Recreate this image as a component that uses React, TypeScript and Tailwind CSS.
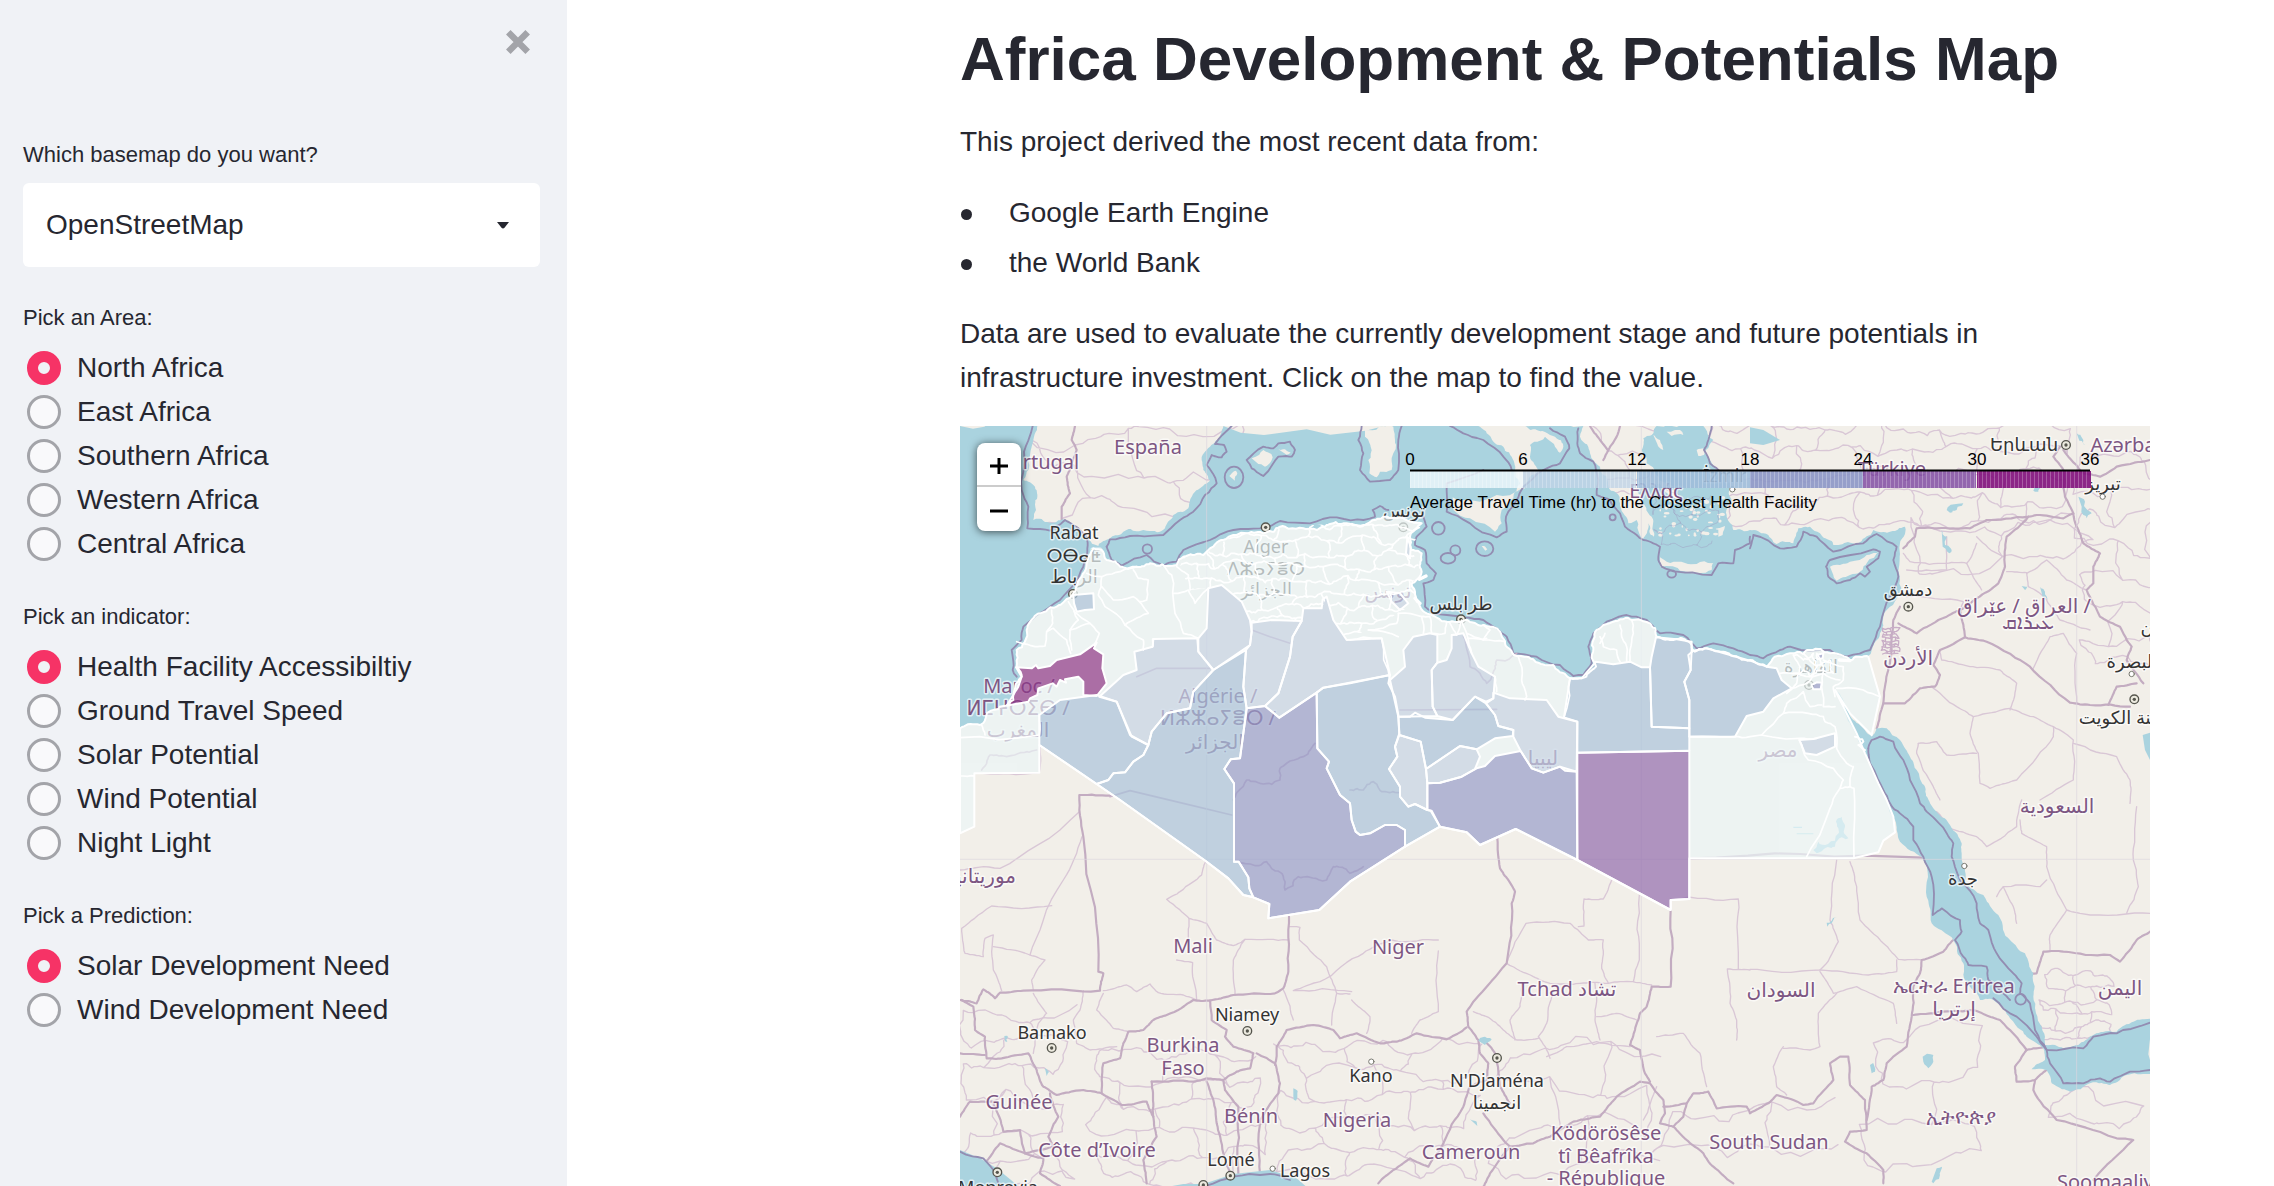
import { useState } from "react";

/* ---------- geometry helpers for the map drawing ---------- */

type Pt = [number, number];

const parse = (s: string): Pt[] =>
  s.trim().split(/\s+/).map((p) => p.split(",").map(Number) as Pt);

const hash = (x: number, y: number) => {
  const v = Math.sin(x * 12.9898 + y * 78.233) * 43758.5453;
  return v - Math.floor(v);
};

const split = (a: Pt, b: Pt, amp: number, depth: number): Pt[] => {
  const len = Math.hypot(b[0] - a[0], b[1] - a[1]);
  if (depth === 0 || len < 10) return [b];
  const mx = (a[0] + b[0]) / 2;
  const my = (a[1] + b[1]) / 2;
  const m: Pt = [
    mx + (hash(mx, my) - 0.5) * len * amp,
    my + (hash(my, mx) - 0.5) * len * amp,
  ];
  return [...split(a, m, amp, depth - 1), ...split(m, b, amp, depth - 1)];
};

const draw = (pts: Pt[], close = false) =>
  "M" + pts.map((p) => `${Math.round(p[0])},${Math.round(p[1])}`).join("L") + (close ? "Z" : "");

const line = (s: string) => draw(parse(s));
const shape = (s: string) => draw(parse(s), true);

const rough = (s: string, close = false, amp = 0.3, depth = 3) => {
  const p = parse(s);
  const out: Pt[] = [p[0]];
  for (let i = 1; i < p.length; i++) out.push(...split(p[i - 1], p[i], amp, depth));
  return draw(out, close);
};

const mesh = (x0: number, y0: number, x1: number, y1: number, cell: number, amp = 0.35) => {
  const at = (i: number, j: number): Pt => [
    x0 + i * cell + (hash(i + x0, j + y0) - 0.5) * cell * 0.7,
    y0 + j * cell * 0.8 + (hash(j + y0 + 7, i + x0) - 0.5) * cell * 0.6,
  ];
  const nx = Math.floor((x1 - x0) / cell);
  const ny = Math.floor((y1 - y0) / (cell * 0.8));
  const out: string[] = [];
  for (let i = 0; i <= nx; i++)
    for (let j = 0; j <= ny; j++) {
      const a = at(i, j);
      if (i < nx) out.push(draw([a, ...split(a, at(i + 1, j), amp, 3)]));
      if (j < ny && (i + j) % 2 === 0) out.push(draw([a, ...split(a, at(i, j + 1), amp, 3)]));
    }
  return out.join("");
};

/* ---------- map data ---------- */

const mediterranean =
  "30,18 262,18 250,60 240,110 235,150 220,180 255,200 262,230 258,270 250,300 300,308 350,300 375,315 400,345 445,378 480,355 520,335 580,330 645,325 670,285 715,265 735,215 780,182 760,150 755,120 780,80 815,35 820,18 1585,18 1610,40 1635,70 1660,80 1685,110 1695,150 1710,190 1700,215 1725,205 1765,150 1740,110 1740,75 1785,50 1815,80 1830,98 1840,80 1815,50 1760,30 1720,18 1900,18 1890,50 1920,100 1950,140 1975,200 2000,220 2020,280 2035,310 2060,300 2075,360 2095,310 2112,350 2105,290 2080,250 2060,210 2100,200 2130,190 2090,130 2075,90 2080,55 2110,40 2120,18 2260,18 2290,60 2265,100 2300,150 2340,190 2345,240 2330,290 2350,330 2400,330 2440,340 2480,372 2530,370 2545,325 2580,320 2610,340 2650,375 2720,372 2770,330 2820,335 2865,320 2850,370 2850,480 2820,560 2790,640 2765,690 2755,710 2700,720 2640,700 2580,690 2520,700 2450,740 2400,720 2370,715 2320,695 2270,685 2235,695 2215,665 2160,660 2120,650 2100,610 2040,598 1990,605 1940,630 1930,690 1938,740 1895,775 1860,775 1810,735 1750,718 1700,708 1665,670 1650,635 1600,615 1545,600 1490,605 1430,580 1400,545 1395,515 1385,490 1415,455 1415,400 1385,390 1380,350 1415,310 1370,300 1300,290 1240,315 1190,310 1130,315 1060,325 990,320 940,340 850,345 790,380 760,405 700,410 680,435 600,430 560,440 510,440 470,420 455,390 430,385 410,430 395,470 370,520 320,560 270,580 230,630 200,690 200,740 215,770 190,840 150,860 90,915 30,925";

const redSea =
  "2655,810 2680,840 2695,875 2730,915 2765,950 2780,925 2810,925 2850,960 2880,1010 2900,1050 2925,1100 2940,1150 2960,1175 3000,1215 3035,1270 3035,1315 3045,1390 3100,1425 3145,1485 3180,1560 3225,1600 3250,1660 3250,1730 3275,1820 3285,1875 3340,1885 3385,1875 3430,1845 3500,1835 3550,1805 3610,1798 3610,1960 3530,1965 3480,1995 3420,1990 3360,2015 3305,1990 3290,1950 3245,1948 3285,1920 3280,1885 3230,1850 3180,1795 3130,1740 3090,1740 3045,1680 3040,1630 3010,1560 2945,1510 2930,1430 2915,1310 2850,1265 2835,1200 2810,1140 2785,1090 2745,1000 2720,950 2690,890";

const otherWater = [
  "600,2310 700,2292 760,2292 850,2262 960,2250 1040,2275 1080,2310",
  "30,2190 90,2215 140,2245 220,2310 30,2310",
  "3578,945 3610,935 3610,1040 3585,990",
  "2400,22 2440,30 2490,60 2440,75 2400,70",
];

const lakes = [
  "2918,1910 2950,1905 2950,1925 2935,1945 2920,1925",
  "3385,230 3405,245 3425,280 3410,295 3395,260",
  "3270,500 3285,515 3293,540 3278,530",
  "2975,330 2990,350 2985,375 3005,390 2998,400 2978,380",
  "2990,270 3040,250 3020,270 3000,278",
  "3215,498 3232,500 3225,510",
  "1585,1862 1605,1850 1625,1858 1605,1875",
  "1560,2098 1580,2105 1582,2118",
  "2630,1508 2660,1492 2645,1510 2632,1520",
  "2760,1935 2770,1930 2775,1955 2765,1960",
  "2960,2245 2975,2240 2970,2265 2950,2290 2945,2285",
  "1030,2005 1040,2010 1038,2042 1030,2030",
  "163,1848 173,1848 172,1866 165,1864",
  "285,1945 298,1955 290,1968",
  "3380,40 3400,60 3405,75 3388,62",
  "3255,200 3270,205 3265,215 3250,212",
];

const islands = [
  "1245,30 1300,18 1330,20 1335,60 1330,100 1325,150 1290,155 1280,172 1258,160 1255,120 1262,80 1245,50",
  "1508,232 1560,240 1640,225 1705,208 1690,235 1655,270 1655,310 1635,335 1560,295 1510,270",
  "905,115 940,90 968,112 945,140 925,132",
  "985,88 1005,88 1022,97 1010,104",
  "838,168 858,152 862,160 855,182",
  "2130,412 2150,425 2180,425 2240,432 2290,430 2285,450 2240,458 2190,452 2130,440",
  "2640,440 2670,435 2700,425 2750,405 2785,395 2750,430 2730,455 2700,465 2660,482 2650,465",
  "2305,325 2325,318 2318,345 2305,350",
  "2120,175 2160,205 2190,235 2175,235 2140,210",
  "2240,90 2260,85 2262,105 2245,108",
  "2110,45 2130,60 2140,90 2122,72",
  "2150,35 2190,30 2200,45 2165,48",
  "1595,378 1612,388 1606,392",
];

const aegean: Pt[] = Array.from({ length: 54 }, (_, i) => [
  2130 + hash(i + 2, 3.7) * 190,
  232 + hash(5.3, i * 1.7) * 115,
]);

const maritime = [
  "248,18 222,95 215,210 235,260 232,325 300,332 345,300 375,318 410,350 412,385 400,440 380,490 330,540 270,580 220,620 215,660 185,690 188,750 200,770",
  "470,380 480,358 540,348 640,345 690,300 730,275 765,225 800,190 770,135 785,105 815,112 830,95 822,75 795,72 845,18",
  "470,380 485,420 515,437 590,405 640,437 680,425 700,390 780,360 850,330 930,325 990,303 1080,310 1160,292 1240,300 1275,290 1268,270 1290,258 1315,270",
  "1420,290 1430,320 1400,350 1395,375 1425,390 1430,430 1458,460 1450,480 1420,490 1425,560 1450,580 1540,592 1600,600 1640,625 1670,650 1690,700 1760,710 1830,735 1870,768 1900,765 1925,730 1915,680 1930,640 1970,605 2030,585 2090,600 2130,640 2200,645 2240,685 2290,670 2350,685 2400,705 2440,715 2490,690 2520,680 2640,690 2690,710 2760,690 2790,620 2820,530 2845,470 2830,420 2840,380 2780,342 2740,370 2650,395 2600,350 2560,335 2540,380 2490,385 2410,345 2400,385",
  "1235,18 1225,60 1240,100 1230,150 1260,185 1320,180 1345,150 1345,60 1355,18",
  "1500,18 1540,40 1600,60 1660,110 1685,150",
  "1600,150 1490,190 1490,275 1560,310 1640,352 1670,335 1668,290 1700,240 1720,200 1780,150 1830,130 1858,85 1845,50 1800,25",
  "1885,25 1882,70 1890,100 1930,125 1945,180 1940,225 1980,240 2010,280 2025,320 2060,345 2080,360 2110,370 2130,380 2125,420 2135,440 2180,455 2285,465 2305,430 2350,430 2355,390 2400,370 2400,350",
  "2285,18 2275,60 2262,90 2280,130 2320,160",
  "2640,420 2770,388 2790,395 2785,415 2750,440 2760,455 2745,470 2730,460 2700,480 2660,490 2635,470 2628,440 2640,420",
  "890,120 940,80 970,85 985,70 1020,65 1035,90 1025,110 985,110 940,168 905,145 890,120",
  "2755,985 2765,960 2790,950 2830,965 2860,1020 2880,1080 2910,1150 2930,1175 2990,1240 3010,1270 3005,1310 3030,1380 3080,1450 3090,1510 3115,1530 3140,1600 3190,1660 3215,1690 3210,1720 3240,1750 3255,1830 3290,1890 3400,1885 3430,1850 3500,1840 3600,1808",
  "2755,985 2760,1030 2800,1110 2820,1150 2850,1180 2890,1220 2890,1260 2920,1310 2945,1370 2948,1485 2975,1465 3030,1500 3035,1535 3015,1560 3040,1610 3055,1635 3110,1640 3115,1680 3160,1720 3180,1740",
  "3130,1735 3200,1790 3260,1850 3290,1890 3300,1930 3340,1990 3400,1990 3450,1975 3480,1985 3540,1955 3600,1950",
  "30,2195 100,2215 130,2250 150,2300",
  "760,2300 850,2270 960,2262 1020,2280",
];

const ringMarks: [number, number, number, number][] = [
  [592, 387, 14, 14],
  [852, 172, 28, 32],
  [1465, 325, 19, 19],
  [1516, 391, 15, 15],
  [1494, 415, 22, 16],
  [1604, 386, 26, 22],
  [1988, 292, 9, 9],
  [2165, 462, 13, 11],
  [3212, 1738, 16, 16],
];

const countryBorders = [
  "375,18 365,60 380,90 365,130 350,170 360,220 335,260 335,300",
  "480,1127 388,1125 400,1250 445,1655 460,1660 450,1712 220,1712 150,1718 135,1735 100,1708 80,1750 30,1740",
  "1017,1490 1015,1655 1000,1705 975,1720 850,1725 780,1742 730,1740 650,1785 610,1800 580,1830 535,1835 520,1870 510,1915 460,1930 455,2020",
  "35,1740 70,1760 75,1830 105,1850 110,1915 155,1915 235,1900 260,1950 280,2000 320,2025 400,2010 455,2020 515,2055 590,2045 610,2090 620,2150 580,2220 590,2290",
  "30,1900 105,1905",
  "30,2090 60,2045 130,2045 160,2135 210,2130 225,2200 280,2215 270,2260 330,2298",
  "300,2020 325,2090 295,2150 310,2180 225,2200",
  "225,2200 150,2170 105,2230",
  "605,1985 610,2050 610,2090",
  "605,1985 730,1985 770,1975 820,1980 860,1955 900,1945 910,1900 850,1880 825,1850 830,1830 785,1800 780,1742",
  "770,1985 790,2040 800,2110 820,2200 840,2260",
  "820,1980 825,2010 865,2060 865,2260",
  "930,2260 930,2100 985,2020 990,1990 975,1930 920,1900",
  "975,1935 980,1880 1010,1830 1090,1815 1150,1830 1170,1855 1220,1840 1290,1870 1340,1865 1400,1840 1490,1858 1550,1822",
  "1642,1255 1650,1345 1675,1380 1695,1415 1685,1450 1670,1630 1570,1745 1550,1775 1555,1820 1585,1860 1590,1900 1615,1930 1610,1980 1560,2000 1540,2060 1480,2170 1435,2240 1380,2215 1330,2250 1285,2290",
  "1600,1860 1635,1900 1650,2000 1680,2050",
  "1600,2080 1660,2160 1680,2180 1750,2170 1800,2150 1870,2105 1950,2090 2000,2030 2070,1985 2100,1990 2140,2040 2145,2080 2130,2110 2170,2120 2210,2160 2260,2200 2290,2240 2350,2290",
  "1680,2180 1620,2260 1600,2300",
  "2162,1470 2162,1700 2105,1700 2090,1760 2070,1780 2055,1830 2040,1875 2070,1890 2085,1960 2100,1985",
  "2140,2060 2210,2050 2230,2020 2275,2015 2300,2065 2390,2060 2400,2080 2455,2050 2480,2025 2560,2055 2590,2050 2650,1980 2640,1930 2670,1910 2695,1910 2700,1995 2745,2040 2750,2130 2700,2135 2685,2165 2750,2200 2800,2250 2800,2290",
  "2210,2050 2200,2090 2170,2120",
  "2750,2100 2765,2000 2800,1980 2810,1930 2870,1880 2885,1790 2890,1700 2910,1660 2915,1620 2980,1595 3010,1560",
  "2890,1785 2950,1780 3070,1770 3150,1800 3230,1890 3290,1880",
  "3230,1890 3195,1940 3200,1985 3255,1980 3290,1950",
  "3255,1980 3250,2010 3320,2100 3500,2155 3550,2160 3430,2280",
  "3190,1665 3260,1660 3280,1595 3340,1595 3480,1605 3510,1625 3560,1560 3600,1535",
  "2218,1315 2920,1313",
  "2800,850 2865,850 2910,805 2955,800 2970,765 2950,735 2970,690 3045,652 3110,665 3240,740 3360,848 3420,855 3540,860",
  "2780,925 2800,850 2812,760 2825,690 2830,600 2850,560",
  "3475,855 3500,800 3560,790",
  "3045,652 3030,570 2990,590 2900,640 2845,610",
  "3030,570 3080,535 3145,490 3165,440 3170,350 3235,290",
  "2860,385 2895,350 2900,325 2960,325 3060,325 3110,300 3235,290 3260,285 3340,295 3370,280 3380,320 3400,370 3450,400 3430,440 3430,490 3410,510 3450,590 3510,620 3545,680 3530,720 3580,790",
  "3370,280 3345,230 3340,150 3310,110 3330,80",
  "3340,90 3400,160 3450,170 3500,140 3600,120",
  "1920,18 1950,60 1975,90 1960,120",
  "1975,90 2000,50 2010,18",
];

const provinceBorders = [
  "30,1350 150,1345 388,1175",
  "396,1250 340,1380 240,1605 285,1620 245,1680 250,1712",
  "305,1457 125,1458 35,1525 45,1600 100,1610 105,1555 130,1545 130,1650 155,1712",
  "130,1580 240,1605",
  "767,1323 755,1365 690,1415 650,1438 717,1495 770,1510 800,1560 850,1577 885,1558 1015,1560",
  "717,1495 715,1560",
  "680,1620 728,1628 740,1740",
  "885,1558 850,1620 855,1725",
  "1017,1520 1050,1522 1048,1560 1130,1640 1160,1720 1145,1815",
  "1160,1720 1200,1722",
  "1000,1710 1030,1800",
  "460,1712 530,1695 560,1715 600,1692 625,1718 700,1725 740,1740",
  "460,1720 440,1770 490,1825 535,1835",
  "400,1712 390,1770 370,1800 380,1870 420,1890 500,1880",
  "250,1720 290,1780 265,1810 250,1900",
  "1465,1560 1325,1560 1240,1600 1110,1685 1030,1712 1205,1715",
  "1465,1593 1465,1775 1410,1800 1385,1840",
  "1205,1740 1260,1790 1250,1840",
  "1670,1630 1728,1510 1860,1510 1915,1560 1960,1560 1955,1645 1975,1690",
  "1885,1520 1902,1518 1902,1437 1960,1437 1985,1380",
  "2068,1425 2068,1620 2050,1685",
  "1670,1630 1750,1670 1800,1690 1890,1690 1975,1690 2050,1685 2105,1695",
  "1715,1690 1710,1760 1680,1800 1695,1860",
  "1810,1710 1790,1810 1765,1850 1800,1915",
  "1935,1690 1935,1800 1950,1860",
  "1570,1775 1610,1790 1660,1830 1700,1860 1765,1855",
  "1940,1790 2000,1780 2060,1800",
  "1790,1910 1850,1880 1940,1865 2040,1880",
  "2162,1437 2365,1437 2365,1647",
  "2400,1650 2332,1647 2340,1750 2360,1800 2360,1860",
  "2400,1648 2610,1650 2665,1565 2640,1500 2660,1320",
  "2700,1325 2720,1400 2730,1500 2800,1570 2845,1618 2915,1620",
  "2610,1650 2755,1665 2840,1655 2840,1620",
  "2610,1655 2650,1720 2720,1700 2830,1750 2840,1810",
  "2500,1880 2470,1940 2480,2000 2510,2025",
  "2500,1885 2580,1890 2610,1880 2605,1780 2660,1720",
  "2080,2100 2120,2000",
  "2120,1850 2200,1840 2250,1900 2270,2000",
  "3210,1200 3215,1240 3290,1280 3290,1340 3350,1470 3390,1480 3600,1480",
  "3530,1480 3565,1400 3550,1320 3560,1160",
  "2960,1175 3000,1225 3080,1250 3110,1280 3200,1220 3215,1140",
  "3290,1380 3270,1400 3160,1400 3140,1430",
  "3300,1590 3300,1545 3350,1470",
  "3160,1400 3190,1460 3200,1510",
  "2945,800 3020,860 3070,890 3060,940 3085,1000 3090,1090 3120,1105 3200,1080 3310,950 3310,920",
  "3070,890 3180,865 3250,890 3310,920 3370,960 3370,1080 3270,1140",
  "2970,690 2975,720 3060,740 3150,750 3200,790 3180,870",
  "2905,970 2900,1000 2950,1100 2970,1140",
  "2905,970 2960,965 2990,1005 3080,1000",
  "3370,970 3500,1010 3540,1080 3540,1150",
  "2860,400 2880,425 2990,430 3050,430 3080,370",
  "3080,350 3160,410",
  "3050,430 3095,510",
  "2870,450 2990,450 2990,350",
  "2870,530 3040,545 3030,570",
  "3170,455 3230,458 3235,500 3290,540 3330,600 3420,630",
  "3250,745 3300,650 3340,640 3380,700 3380,850",
  "3230,460 3290,420 3350,480 3410,510",
  "268,970 268,1058 73,1060",
  "150,18 190,60 220,100",
];

const LIGHT = "#ecf6f7";
const MIST = "#c7d5e6";
const STEEL = "#abc4db";
const LILAC = "#999fca";
const PURPLE = "#936dae";
const MAGENTA = "#8e3889";

const regions: { fill: string; d: string }[] = [
  {
    fill: LIGHT,
    d: rough(
      "30,925 90,915 150,860 190,840 215,770 200,740 200,690 230,630 270,580 320,560 370,520 395,470 410,430 430,385 455,390 470,420 510,440 560,440 600,430 680,435 700,410 760,405 790,380 850,345 940,340 990,320 1060,325 1130,315 1190,310 1240,315 1300,290 1370,300 1415,310 1380,350 1385,390 1415,400 1415,455 1385,490 1395,515 1400,545 1430,580 1490,605 1545,600 1600,615 1650,635 1665,670 1700,708 1750,718 1810,735 1860,775 1895,775 1938,740 1930,690 1940,630 1990,605 2040,598 2100,610 2120,650 2160,660 2215,665 2235,695 2270,685 2320,695 2370,715 2400,720 2450,740 2520,700 2580,690 2640,700 2700,720 2755,710",
      false,
      0.3,
      3
    ) +
      "L2790,830 2765,945 2700,880 2655,810 2690,880 2720,940 2745,1000 2785,1090 2810,1140 2830,1190 2835,1237 2800,1262 2785,1297 2710,1315 2218,1315 2218,1437 2162,1440 2162,1470 1882,1320 1697,1227 1590,1275 1550,1237 1470,1220 1365,1280 1200,1385 1108,1470 955,1495 958,1452 910,1432 880,1425 835,1375 767,1323 510,1140 268,975 268,1058 73,1060 73,1220 30,1240Z",
  },
  { fill: MAGENTA, d: shape("198,742 245,745 258,735 265,745 300,738 320,720 390,703 440,668 432,685 460,703 457,745 470,790 440,828 400,825 400,785 385,770 345,778 348,788 330,780 320,800 308,790 265,805 262,825 240,835 235,845 170,857 205,800 215,770") },
  { fill: STEEL, d: shape("370,525 430,520 432,568 405,570 380,575 372,550") },
  { fill: MIST, d: shape("610,657 742,655 745,695 790,750 730,815 720,865 650,880 605,935 595,975 545,950 500,845 448,830 520,765 560,750 553,695 608,680") },
  { fill: STEEL, d: shape("268,885 330,840 440,825 500,845 540,945 595,975 580,1005 550,1025 525,1057 490,1060 475,1080 440,1092 268,975") },
  { fill: MIST, d: shape("775,505 815,495 875,545 900,600 905,635 900,675 790,750 745,695 745,655 770,625") },
  { fill: STEEL, d: shape("888,690 880,800 890,865 870,1015 842,1018 823,1047 852,1090 852,1325 866,1325 895,1372 898,1405 910,1432 880,1425 835,1375 767,1323 510,1140 440,1092 475,1080 490,1060 525,1057 550,1025 580,1005 595,975 605,935 650,880 720,865 730,815 790,750") },
  { fill: MIST, d: shape("905,608 965,600 1055,603 1028,650 1020,710 985,820 945,858 890,865 880,800 888,690 900,675 905,635") },
  { fill: MIST, d: shape("1060,565 1115,565 1118,538 1130,530 1150,600 1190,660 1295,655 1320,765 1200,790 1120,803 1100,818 988,893 945,858 985,820 1020,710 1028,650 1055,603") },
  { fill: LILAC, d: shape("890,865 945,858 988,893 1100,818 1102,985 1137,1025 1130,1045 1170,1125 1200,1150 1205,1200 1217,1235 1230,1245 1260,1240 1305,1215 1340,1215 1365,1230 1365,1280 1200,1385 1108,1470 955,1495 958,1452 910,1432 898,1405 895,1372 866,1325 852,1325 852,1090 823,1047 842,1018 870,1015") },
  { fill: STEEL, d: shape("1100,818 1120,803 1320,765 1315,790 1335,830 1345,885 1348,940 1335,980 1342,1010 1317,1047 1350,1100 1350,1130 1375,1160 1395,1152 1432,1170 1445,1172 1470,1220 1365,1280 1365,1230 1340,1215 1305,1215 1260,1240 1230,1245 1217,1235 1205,1200 1200,1150 1170,1125 1130,1045 1137,1025 1102,985") },
  { fill: MIST, d: shape("1390,650 1440,640 1462,645 1462,728 1445,750 1448,860 1462,888 1345,890 1320,780 1365,740 1360,690") },
  { fill: MIST, d: shape("1505,645 1540,640 1565,700 1585,740 1635,770 1630,835 1608,845 1575,830 1508,900 1462,888 1448,860 1445,750 1462,728 1490,720 1505,685") },
  { fill: STEEL, d: shape("1345,890 1380,890 1395,878 1425,893 1508,900 1575,830 1608,850 1635,885 1645,918 1690,930 1688,948 1635,955 1580,988 1530,978 1428,1047 1412,965 1348,945") },
  { fill: MIST, d: shape("1348,945 1412,965 1428,1047 1432,1090 1432,1170 1395,1152 1375,1160 1350,1130 1350,1100 1317,1047 1342,1010 1335,980") },
  { fill: MIST, d: shape("1428,1047 1530,978 1580,988 1590,1010 1575,1047 1535,1070 1470,1088 1432,1090") },
  { fill: MIST, d: shape("1630,818 1680,835 1790,840 1825,890 1882,905 1880,1055 1830,1040 1780,1058 1745,1045 1712,993 1690,950 1690,930 1645,918 1635,885 1608,850 1630,835") },
  { fill: LILAC, d: shape("1432,1090 1470,1088 1535,1070 1580,1045 1605,1038 1635,1008 1712,993 1745,1045 1780,1058 1830,1040 1845,1052 1880,1055 1882,1320 1697,1227 1590,1275 1550,1237 1470,1220 1442,1172 1432,1170") },
  { fill: STEEL, d: shape("1860,775 1895,775 1938,725 1990,733 2040,725 2075,742 2100,742 2105,920 2218,925 2218,992 1882,998 1882,905 1842,892") },
  { fill: STEEL, d: shape("2118,652 2180,658 2225,665 2225,690 2222,750 2203,785 2218,840 2218,925 2105,920 2100,742 2105,710") },
  { fill: PURPLE, d: shape("1882,998 2218,992 2218,1437 2162,1440 2162,1470 1882,1320") },
  { fill: STEEL, d: shape("2230,692 2270,685 2400,722 2450,740 2480,745 2495,780 2525,805 2470,835 2440,875 2390,888 2355,950 2218,950 2218,840 2203,785 2222,750 2215,705") },
  { fill: MIST, d: shape("2548,960 2590,957 2655,940 2655,980 2600,1005 2565,1000") },
  { fill: LILAC, d: shape("2585,795 2600,787 2615,788 2612,808 2590,808") },
  { fill: LILAC, d: shape("2600,705 2620,700 2618,715 2602,718") },
  { fill: MIST, d: shape("1310,515 1350,520 1375,550 1350,570 1325,545") },
  { fill: MIST, d: shape("1372,352 1382,380 1380,415 1368,400") },
];

const whiteLines = [
  "30,953 268,945 268,885",
  "95,915 105,945",
  "30,1068 73,1068",
  "200,665 255,680 285,678 290,635 310,625 350,660 362,700",
  "305,570 308,610 290,635",
  "360,630 420,610 448,640 435,670",
  "355,545 385,600 360,630 365,690",
  "372,575 420,610",
  "410,460 455,470 445,525 465,560 525,615 580,660 580,690",
  "455,470 510,455 560,440",
  "455,500 490,540 550,530 580,560 595,580 550,600 525,615",
  "550,450 565,475 595,480 590,540 570,545",
  "640,435 665,465 675,580 700,640 745,655",
  "670,520 715,510 735,550 775,505",
  "680,440 715,465 720,510",
  "608,680 608,657",
  "1555,655 1610,655",
  "1320,780 1295,655 1200,660",
  "1255,630 1340,610 1345,580",
  "1255,630 1320,640 1345,650",
  "1345,580 1415,590 1420,640",
  "1415,590 1440,590 1445,640",
  "1490,605 1485,640 1445,640",
  "1500,610 1520,645 1505,645",
  "1520,645 1535,600 1550,640 1600,660 1665,665",
  "1550,640 1565,700",
  "1600,615 1620,630 1600,660",
  "1635,770 1640,815",
  "1705,710 1715,780 1730,830 1725,840",
  "1860,775 1842,892",
  "1950,650 1960,680 2000,690 2010,725",
  "2010,615 2015,650 2030,680 2030,725",
  "2045,600 2050,640 2040,690 2040,725",
  "1965,640 1950,670",
  "2218,950 2355,950 2400,950 2550,955 2600,955",
  "2435,945 2500,880 2575,880 2620,890",
  "2500,880 2510,850 2560,815 2580,860 2615,855",
  "2525,805 2570,790 2600,740 2560,700",
  "2490,760 2540,760 2580,770 2620,760 2670,780",
  "2530,705 2550,740 2540,790 2510,820",
  "2600,700 2620,740 2615,800 2620,860 2655,860",
  "2620,720 2680,740 2680,780 2650,800 2655,830",
  "2660,805 2740,810 2790,830",
  "2620,890 2625,905 2655,920 2660,985 2690,1030 2710,1040 2700,1100 2712,1105 2712,1312",
  "2548,960 2575,1020 2650,1045 2680,1080 2670,1105 2700,1100",
  "2670,1105 2640,1165 2570,1310",
];

/* ---------- labels, placed in drawing units ---------- */

type Label = { x: number; y: number; t: string; c?: boolean };
const labels: Label[] = [
  { x: 595, y: 103, t: "España" },
  { x: 303, y: 148, t: "rtugal" },
  { x: 372, y: 358, t: "Rabat", c: true },
  { x: 372, y: 425, t: "ⵔⴱⴰⵟ", c: true },
  { x: 372, y: 490, t: "الرباط", c: true },
  { x: 947, y: 400, t: "Alger", c: true },
  { x: 947, y: 465, t: "ⴷⵣⴰⵢⴻⵔ", c: true },
  { x: 947, y: 528, t: "الجزائر", c: true },
  { x: 208, y: 818, t: "Maroc /" },
  { x: 205, y: 886, t: "ⵍⵎⵖⵔⵉⴱ /" },
  { x: 205, y: 952, t: "المغرب" },
  { x: 803, y: 850, t: "Algérie /" },
  { x: 803, y: 916, t: "ⵍⵣⵣⴰⵢⴻⵔ /" },
  { x: 795, y: 986, t: "الجزائر" },
  { x: 1362, y: 290, t: "تونس", c: true },
  { x: 1315, y: 535, t: "تونس" },
  { x: 1533, y: 570, t: "طرابلس", c: true },
  { x: 1780, y: 1035, t: "ليبيا" },
  { x: 2118, y: 234, t: "Ελλάς" },
  { x: 2325, y: 186, t: "İzmir", c: true },
  { x: 2825, y: 168, t: "Türkiye" },
  { x: 3223, y: 94, t: "Երևան", c: true },
  { x: 3520, y: 96, t: "Azərba" },
  { x: 3458, y: 210, t: "تبريز", c: true },
  { x: 2875, y: 528, t: "دمشق", c: true },
  { x: 3222, y: 580, t: "العراق / عێراق /" },
  { x: 3235, y: 628, t: "ܥܝܪܐܩ" },
  { x: 2875, y: 735, t: "الأردن" },
  { x: 2582, y: 760, t: "القاهرة", c: true },
  { x: 2485, y: 1010, t: "مصر" },
  { x: 3546, y: 745, t: "البصرة", c: true },
  { x: 3530, y: 912, t: "مدينة الكويت", c: true },
  { x: 3590, y: 642, t: "ن", c: true },
  { x: 3320, y: 1178, t: "السعودية" },
  { x: 3040, y: 1395, t: "جدة", c: true },
  { x: 100, y: 1390, t: "موريتانيا" },
  { x: 728, y: 1598, t: "Mali" },
  { x: 1343, y: 1602, t: "Niger" },
  { x: 1850, y: 1728, t: "Tchad تشاد" },
  { x: 2494, y: 1732, t: "السودان" },
  { x: 3013, y: 1720, t: "ኤርትራ Eritrea" },
  { x: 3013, y: 1787, t: "إرتريا" },
  { x: 3510, y: 1724, t: "اليمن" },
  { x: 892, y: 1804, t: "Niamey", c: true },
  { x: 306, y: 1856, t: "Bamako", c: true },
  { x: 700, y: 1896, t: "Burkina" },
  { x: 700, y: 1964, t: "Faso" },
  { x: 208, y: 2068, t: "Guinée" },
  { x: 902, y: 2108, t: "Bénin" },
  { x: 1222, y: 2122, t: "Nigeria" },
  { x: 1263, y: 1986, t: "Kano", c: true },
  { x: 1642, y: 2002, t: "N'Djaména", c: true },
  { x: 1642, y: 2066, t: "انجمينا", c: true },
  { x: 1562, y: 2218, t: "Cameroun" },
  { x: 1968, y: 2160, t: "Ködörösêse" },
  { x: 1968, y: 2228, t: "tî Bêafrîka" },
  { x: 1968, y: 2296, t: "- République" },
  { x: 2457, y: 2188, t: "South Sudan" },
  { x: 3032, y: 2112, t: "ኢትዮጵያ" },
  { x: 440, y: 2212, t: "Côte d’Ivoire" },
  { x: 842, y: 2238, t: "Lomé", c: true },
  { x: 1065, y: 2272, t: "Lagos", c: true },
  { x: 145, y: 2322, t: "Monrovia", c: true },
  { x: 3484, y: 2306, t: "Soomaaliya" },
];

const capitals: Pt[] = [
  [369, 522], [947, 322], [1360, 322], [1533, 598], [3348, 75], [2875, 560], [3553, 838],
  [2577, 795], [892, 1833], [305, 1884], [1641, 1914], [142, 2257], [841, 2267], [760, 2295],
];
const towns: Pt[] = [[3458, 230], [3545, 762], [3043, 1338], [1264, 1925], [968, 2246], [2347, 208]];

function BaseMap() {
  return (
    <svg
      viewBox="0 0 1190 760"
      className="block h-auto w-full bg-[#f2efe9]"
      role="img"
      aria-label="Map of North Africa by travel time to the closest health facility"
    >
      <defs>
        <clipPath id="maghreb">
          <path d={shape("690,440 700,410 760,405 850,345 990,320 1190,310 1300,290 1415,310 1385,390 1415,455 1385,490 1400,545 1345,580 1255,630 1190,655 1150,600 1130,530 1115,565 1060,565 1055,603 905,608 875,545 815,495 775,505 720,510")} />
        </clipPath>
        <pattern id="stripes" width="4" height="16" patternUnits="userSpaceOnUse">
          <path d="M0,0H1V16H0Z" fill="#fff" opacity="0.25" />
        </pattern>
      </defs>
      <g transform="translate(-10 -6) scale(0.333333)" strokeLinejoin="round" strokeLinecap="round" fill="none">
        <g stroke="#d9c7d6" strokeWidth="4">
          <path d={mesh(250, 30, 850, 330, 150)} />
          <path d={mesh(1940, 20, 2120, 300, 90)} />
          <path d={mesh(2260, 20, 3380, 330, 90)} />
          <path d={mesh(3400, 120, 3620, 780, 110)} />
          <path d={mesh(2870, 320, 3400, 520, 130)} />
          <path d={mesh(30, 1780, 440, 2300, 105)} />
          <path d={mesh(440, 1900, 1000, 2300, 95)} />
          <path d={mesh(1000, 1880, 1580, 2300, 95)} />
          <path d={mesh(1640, 1880, 2140, 2300, 150)} />
          <path d={mesh(2140, 2080, 2720, 2320, 160)} />
          <path d={mesh(2760, 1860, 3180, 2320, 150)} />
          <path d={mesh(3280, 1660, 3480, 1860, 50)} />
          <path d={mesh(3290, 2020, 3600, 2200, 130)} />
          {provinceBorders.map((s) => (
            <path key={s} d={rough(s, false, 0.1, 3)} />
          ))}
        </g>
        <g stroke="#c3acc1" strokeWidth="6.5">
          {countryBorders.map((s) => (
            <path key={s} d={rough(s, false, 0.08, 3)} />
          ))}
        </g>
        <path d={mesh(2798, 625, 2846, 710, 12)} stroke="#c8adc6" strokeWidth="4" />
        <g fill="#aad3df">
          <path d={rough(mediterranean, true)} />
          <path d={rough(redSea, true, 0.2)} />
          {otherWater.map((s) => (
            <path key={s} d={shape(s)} />
          ))}
          {lakes.map((s) => (
            <path key={s} d={rough(s, true, 0.5, 2)} />
          ))}
        </g>
        <g fill="#f2efe9">
          {islands.map((s) => (
            <path key={s} d={rough(s, true, 0.3, 2)} />
          ))}
          {aegean.map(([x, y], i) => (
            <ellipse key={i} cx={x} cy={y} rx={2 + hash(i, 4) * 7} ry={2 + hash(i, 9) * 4} />
          ))}
        </g>
        <path d={mesh(2120, 230, 2340, 400, 60, 0.5)} stroke="#9c96bd" strokeWidth="3" opacity="0.4" />
        <g stroke="#938db2" strokeWidth="5.5">
          {maritime.map((s) => (
            <path key={s} d={rough(s, false, 0.14, 2)} />
          ))}
          {ringMarks.map(([x, y, a, b]) => (
            <ellipse key={`${x}-${y}`} cx={x} cy={y} rx={a} ry={b} />
          ))}
        </g>
        <g stroke="#c9b2c7" strokeWidth="5">
          <path d={line("560,770 620,745 700,745 780,745")} />
          <path d={rough("850,1140 890,1080 930,1090 990,1080 990,1045 1060,1010 1095,970")} />
          <path d={rough("860,1325 950,1325 1000,1370 1005,1410 1045,1370 1130,1380 1150,1340 1200,1360 1240,1340")} />
          <path d={rough("95,1050 120,1005 170,1010 260,990")} />
          <path d={line("480,1130 540,1112 700,1150 845,1185")} />
          <path d={line("905,630 960,650 1020,670")} />
          <path d={rough("1200,1110 1240,1110 1270,1085 1295,1115 1345,1118")} />
          <path d={line("1350,870 1640,868")} />
          <path d={rough("1540,650 1560,740 1610,790 1640,720 1700,700")} />
        </g>
        <g stroke="#dcd6de" strokeWidth="2">
          <path d="M770,18V2300M2074,18V2300M3380,18V2300M30,1318H3600" />
        </g>
      </g>

      <g fontFamily="'Noto Sans','DejaVu Sans','Noto Sans Arabic',sans-serif" textAnchor="middle">
        {labels.map((l) => (
          <text
            key={`${l.x}-${l.y}`}
            x={Math.round(l.x / 3) - 10}
            y={Math.round(l.y / 3) - 6}
            fontSize={l.c ? 18 : 20}
            fill={l.c ? "#333333" : "#7d5683"}
            stroke="#fff"
            strokeOpacity="0.65"
            strokeWidth="3"
            strokeLinejoin="round"
            paintOrder="stroke"
          >
            {l.t}
          </text>
        ))}
      </g>

      <g transform="translate(-10 -6) scale(0.333333)" strokeLinejoin="round" strokeLinecap="round" fill="none">
        {capitals.map(([x, y]) => (
          <g key={`${x}-${y}`}>
            <circle cx={x} cy={y} r="13" fill="#eceadf" stroke="#55554d" strokeWidth="4" />
            <circle cx={x} cy={y} r="5" fill="#55554d" />
          </g>
        ))}
        {towns.map(([x, y]) => (
          <circle key={`${x}-${y}`} cx={x} cy={y} r="8" fill="#fff" stroke="#77776f" strokeWidth="3" />
        ))}
        <g opacity="0.7">
          {regions.map((r) => (
            <path key={r.d} d={r.d} fill={r.fill} />
          ))}
        </g>
        <g fill="#d5ebf0">
          <path d={rough("2590,1290 2605,1265 2625,1275 2655,1262 2665,1225 2658,1205 2675,1190 2685,1215 2682,1240 2695,1255 2675,1252 2655,1280 2625,1285 2600,1300", true, 0.4, 2)} />
          <path d="M2530,1220H2556V1224H2530ZM2540,1240H2590V1243H2540Z" />
        </g>
        <g stroke="#fff" strokeWidth="6">
          {regions.map((r) => (
            <path key={r.d} d={r.d} />
          ))}
          {whiteLines.map((s) => (
            <path key={s} d={rough(s, false, 0.16, 2)} strokeWidth="5" />
          ))}
          <path d={mesh(680, 320, 1460, 660, 50)} clipPath="url(#maghreb)" strokeWidth="5" />
          <path d={rough("2530,705 2560,720 2590,700 2600,740 2640,720 2650,760 2580,770 2560,750 2530,760", false, 0.5)} strokeWidth="5" />
          <path d={rough("2715,950 2740,965 2725,975 2745,990", false, 0.5)} />
          <path d="M1408,478 1428,468M1395,535 1410,550M2668,720 2700,722" strokeWidth="10" />
        </g>
      </g>

      <g transform="translate(450 1)">
        {["#edf8fb", "#bfd3e6", "#9ebcda", "#8c96c6", "#8856a7", "#810f7c"].map((c, i) => (
          <rect key={c} x={Math.round((i * 680) / 6)} y="44" width={i % 3 === 2 ? 114 : 113} height="17" fill={c} opacity={i < 2 ? 0.8 : 0.9} />
        ))}
        <rect x="0" y="44" width="680" height="17" fill="url(#stripes)" />
        <path d="M0,43.5H680" stroke="#000" strokeWidth="2" />
        <g fontFamily="'Liberation Sans',Arial,sans-serif" fontSize="17" fill="#000">
          {[0, 6, 12, 18, 24, 30, 36].map((n, i) => (
            <text key={n} x={Math.round((i * 680) / 6)} y="38" textAnchor="middle">
              {n}
            </text>
          ))}
          <text x="0" y="81">
            Average Travel Time (hr) to the Closest Health Facility
          </text>
        </g>
      </g>
    </svg>
  );
}

function RadioGroup({ name, label, options }: { name: string; label: string; options: string[] }) {
  const [value, setValue] = useState(options[0]);
  return (
    <fieldset>
      <legend className="mb-3 text-[22px] leading-8">{label}</legend>
      {options.map((o) => (
        <label key={o} className="flex h-11 items-center gap-4 pl-1 text-[28px]">
          <input
            type="radio"
            name={name}
            value={o}
            checked={value === o}
            onChange={() => setValue(o)}
            className="size-[34px] shrink-0 appearance-none rounded-full border-3 border-[#a3a4a9] bg-[#f9f9fb] checked:border-[11px] checked:border-[#f63366] checked:bg-[#f0f2f6]"
          />
          {o}
        </label>
      ))}
    </fieldset>
  );
}

function Sidebar() {
  return (
    <aside className="flex w-[567px] shrink-0 flex-col bg-[#f0f2f6] pr-[27px] pl-[23px]">
      <div className="flex h-[139px] items-start justify-end pt-[30px] pr-2.5">
        <button type="button" aria-label="Close sidebar">
          <svg viewBox="0 0 24 24" className="size-6 text-[#a3a4a9]" stroke="currentColor" strokeWidth="6.4">
            <path d="M2.3 2.3 21.7 21.7M21.7 2.3 2.3 21.7" />
          </svg>
        </button>
      </div>
      <div className="flex flex-col gap-[35px]">
        <div>
          <label htmlFor="basemap" className="mb-3 block text-[22px] leading-8">
            Which basemap do you want?
          </label>
          <div className="relative">
            <select
              id="basemap"
              className="h-[84px] w-full appearance-none rounded-md bg-white px-[23px] text-[28px]"
              defaultValue="OpenStreetMap"
            >
              <option>OpenStreetMap</option>
            </select>
            <svg viewBox="0 0 12 7" className="pointer-events-none absolute top-[39px] right-[31px] h-[7px] w-3" fill="#262730">
              <path d="M0 0H12L7.5 5.8Q6 7 4.5 5.8Z" />
            </svg>
          </div>
        </div>
        <RadioGroup
          name="area"
          label="Pick an Area:"
          options={["North Africa", "East Africa", "Southern Africa", "Western Africa", "Central Africa"]}
        />
        <RadioGroup
          name="indicator"
          label="Pick an indicator:"
          options={["Health Facility Accessibiltiy", "Ground Travel Speed", "Solar Potential", "Wind Potential", "Night Light"]}
        />
        <RadioGroup name="prediction" label="Pick a Prediction:" options={["Solar Development Need", "Wind Development Need"]} />
      </div>
    </aside>
  );
}

export default function App() {
  return (
    <div className="flex h-screen overflow-hidden bg-white font-['Liberation_Sans',Arial,sans-serif] text-[#262730]">
      <Sidebar />
      <main className="flex min-w-0 flex-1 justify-end overflow-hidden pr-31">
        <div className="w-full max-w-[1190px] pt-[21px] text-[28px] leading-11">
          <h1 className="mb-[23px] text-[62px] leading-[76px] font-bold">Africa Development &amp; Potentials Map</h1>
          <p>This project derived the most recent data from:</p>
          <ul className="my-[27px] flex flex-col gap-1.5">
            {["Google Earth Engine", "the World Bank"].map((t) => (
              <li key={t} className="flex items-center gap-[37px] pl-px">
                <span className="mt-0.5 size-[11px] rounded-full bg-[#262730]" />
                {t}
              </li>
            ))}
          </ul>
          <p className="max-w-[1080px]">
            Data are used to evaluate the currently development stage and future potentials in infrastructure
            investment. Click on the map to find the value.
          </p>
          <div className="relative mt-[26px]">
            <BaseMap />
            <div className="absolute top-[17px] left-[17px] flex w-11 flex-col overflow-hidden rounded-lg bg-white text-black shadow-[0_1px_8px_rgba(0,0,0,0.65)]">
              <button type="button" aria-label="Zoom in" className="flex h-11 items-center justify-center border-b-2 border-[#ccc] pt-1">
                <svg viewBox="0 0 18 18" className="size-[18px]" stroke="currentColor" strokeWidth="3">
                  <path d="M0 9H18M9 1V17" />
                </svg>
              </button>
              <button type="button" aria-label="Zoom out" className="flex h-11 items-center justify-center pt-1">
                <svg viewBox="0 0 18 18" className="size-[18px]" stroke="currentColor" strokeWidth="3">
                  <path d="M0 9H18" />
                </svg>
              </button>
            </div>
          </div>
        </div>
      </main>
    </div>
  );
}
